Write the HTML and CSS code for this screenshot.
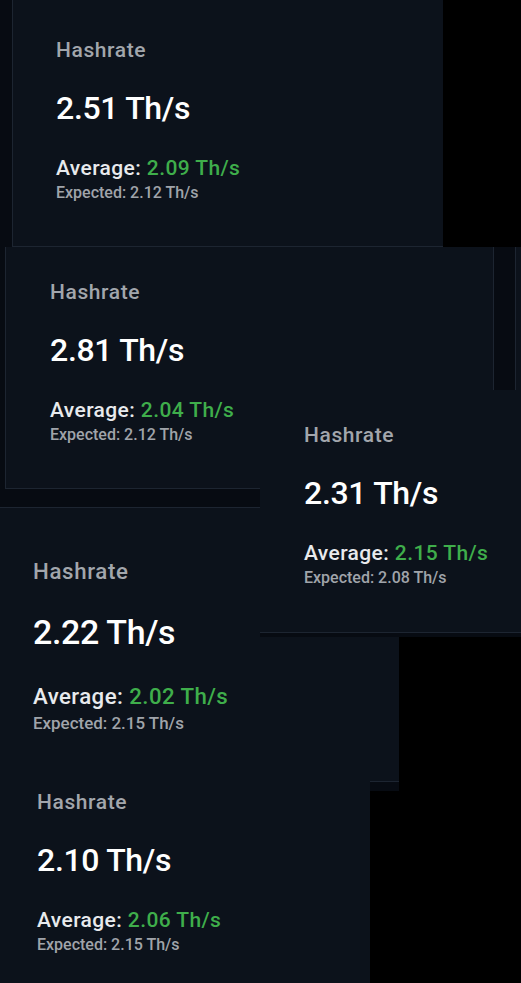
FILE: index.html
```html
<!DOCTYPE html>
<html lang="en">
<head>
<meta charset="utf-8">
<title>Hashrate cards</title>
<link rel="stylesheet" href="styles.css">
</head>
<body>
<main class="canvas">
  <section class="tile tile--1">
    <article class="card card--1">
      <div class="card__label">Hashrate</div>
      <div class="card__value">2.51 Th/s</div>
      <div class="card__avg">Average: <span class="card__avg-num">2.09 Th/s</span></div>
      <div class="card__exp">Expected: 2.12 Th/s</div>
    </article>
  </section>
  <section class="tile tile--2">
    <article class="card card--2">
      <div class="card__label">Hashrate</div>
      <div class="card__value">2.81 Th/s</div>
      <div class="card__avg">Average: <span class="card__avg-num">2.04 Th/s</span></div>
      <div class="card__exp">Expected: 2.12 Th/s</div>
    </article>
  </section>
  <section class="tile tile--edge">
    <div class="card card--edge"></div>
  </section>
  <section class="tile tile--4">
    <article class="card card--4">
      <div class="card__label">Hashrate</div>
      <div class="card__value">2.22 Th/s</div>
      <div class="card__avg">Average: <span class="card__avg-num">2.02 Th/s</span></div>
      <div class="card__exp">Expected: 2.15 Th/s</div>
    </article>
  </section>
  <section class="tile tile--3">
    <article class="card card--3">
      <div class="card__label">Hashrate</div>
      <div class="card__value">2.31 Th/s</div>
      <div class="card__avg">Average: <span class="card__avg-num">2.15 Th/s</span></div>
      <div class="card__exp">Expected: 2.08 Th/s</div>
    </article>
  </section>
  <section class="tile tile--5">
    <article class="card card--5">
      <div class="card__label">Hashrate</div>
      <div class="card__value">2.10 Th/s</div>
      <div class="card__avg">Average: <span class="card__avg-num">2.06 Th/s</span></div>
      <div class="card__exp">Expected: 2.15 Th/s</div>
    </article>
  </section>
</main>
</body>
</html>
```

FILE: styles.css
```css
* { box-sizing: border-box; }

html, body {
  margin: 0;
  padding: 0;
  background: #000;
}

.canvas {
  position: relative;
  width: 521px;
  height: 983px;
  overflow: hidden;
  background: #000;
  font-family: Roboto, "Liberation Sans", sans-serif;
}

/* tiles: overlapping panels on a free canvas */
.tile {
  position: absolute;
  display: flex;
  align-items: flex-start;
  background: #070b12;
}

.card {
  --s: 1;
  display: flex;
  flex-direction: column;
  background: #0c121b;
  border: 0 solid #1d2531;
}

.card__label {
  font-size: calc(21px * var(--s));
  line-height: calc(24px * var(--s));
  font-weight: 500;
  letter-spacing: calc(0.6px * var(--s));
  color: #a2a6ac;
}

.card__value {
  margin-top: calc(28px * var(--s));
  font-size: calc(32px * var(--s));
  line-height: calc(36px * var(--s));
  font-weight: 500;
  letter-spacing: calc(-0.3px * var(--s));
  color: #ffffff;
}

.card__avg {
  margin-top: calc(30px * var(--s));
  font-size: calc(21px * var(--s));
  line-height: calc(24px * var(--s));
  font-weight: 500;
  letter-spacing: calc(0.4px * var(--s));
  color: #e8eaed;
}

.card__avg-num {
  color: #3fae4b;
}

.card__exp {
  margin-top: calc(3px * var(--s));
  font-size: calc(16px * var(--s));
  line-height: calc(20px * var(--s));
  font-weight: 500;
  color: #a0a4aa;
}

/* tile 1 */
.tile--1 {
  left: 0;
  top: 0;
  width: 443px;
  height: 247px;
  padding-left: 12px;
}
.card--1 {
  width: 431px;
  height: 247px;
  border-left-width: 1px;
  border-bottom-width: 1px;
  padding: 38px 0 0 43px;
}

/* tile 2 */
.tile--2 {
  left: 0;
  top: 247px;
  width: 516px;
  height: 260px;
  padding-left: 5px;
}
.card--2 {
  width: 489px;
  height: 242px;
  border-left-width: 1px;
  border-right-width: 1px;
  border-bottom-width: 1px;
  padding: 33px 0 0 44px;
}

/* sliver of a card at the right edge */
.tile--edge {
  left: 515px;
  top: 247px;
  width: 6px;
  height: 143px;
}
.card--edge {
  width: 6px;
  height: 143px;
  border-left-width: 1px;
}

/* tile 4 (slightly larger scale) */
.tile--4 {
  left: 0;
  top: 507px;
  width: 399px;
  height: 284px;
}
.card--4 {
  --s: 1.06;
  width: 399px;
  height: 275px;
  border-top-width: 1px;
  border-bottom-width: 1px;
  padding: 51px 0 0 33px;
}

/* tile 3 */
.tile--3 {
  left: 260px;
  top: 390px;
  width: 261px;
  height: 247px;
}
.card--3 {
  width: 261px;
  height: 243px;
  border-bottom-width: 1px;
  padding: 33px 0 0 44px;
}

/* tile 5 */
.tile--5 {
  left: 0;
  top: 781px;
  width: 370px;
  height: 202px;
}
.card--5 {
  width: 370px;
  height: 202px;
  padding: 9px 0 0 37px;
}
```
